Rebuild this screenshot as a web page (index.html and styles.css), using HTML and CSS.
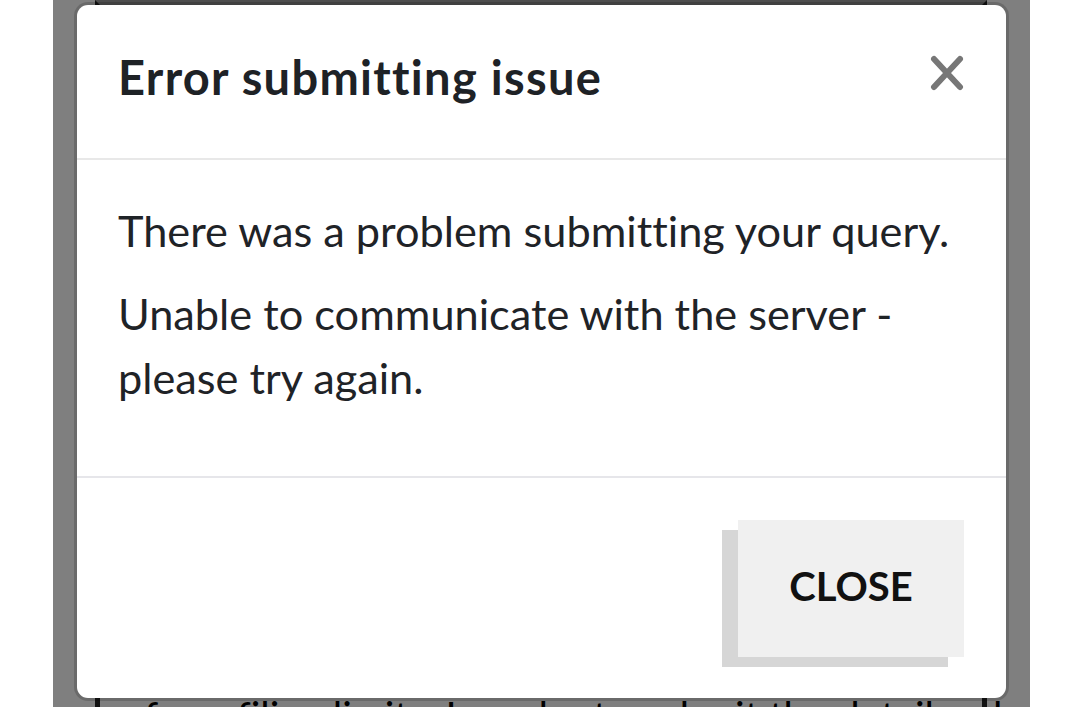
FILE: index.html
```html
<!DOCTYPE html>
<html lang="en">
<head>
<meta charset="utf-8">
<title>Error submitting issue</title>
<link rel="stylesheet" href="styles.css">
</head>
<body>
<div class="screen">
  <div class="bg-card">
    <p class="bg-text">of our filing limits. In order to submit the details, please email</p>
  </div>
  <div class="overlay">
    <div class="modal" role="dialog" aria-labelledby="modal-title">
      <div class="modal-header">
        <h1 id="modal-title" class="modal-title">Error submitting issue</h1>
        <button class="icon-close" aria-label="Close">
          <svg width="34" height="36" viewBox="0 0 34 36" aria-hidden="true">
            <path d="M4 4 L30 32 M30 4 L4 32" stroke="#777" stroke-width="6" stroke-linecap="round" fill="none"/>
          </svg>
        </button>
      </div>
      <div class="modal-body">
        <p class="msg">There was a problem submitting your query.</p>
        <p class="msg">Unable to communicate with the server - please try again.</p>
      </div>
      <div class="modal-footer">
        <button class="btn-close">CLOSE</button>
      </div>
    </div>
  </div>
</div>
</body>
</html>
```

FILE: styles.css
```css
* { box-sizing: border-box; }

html, body {
  margin: 0;
  padding: 0;
  background: #ffffff;
}

body {
  font-family: "Lato", "Open Sans", sans-serif;
  font-variant-ligatures: none;
  color: #1f2327;
}

.screen {
  position: relative;
  width: 977px;
  height: 707px;
  margin-left: 53px;
  overflow: hidden;
  background: #ffffff;
}

.bg-card {
  margin-left: 42px;
  width: 892px;
  height: 760px;
  border-top: 5px solid #9a9a9a;
  border-left: 5px solid #222;
  border-right: 5px solid #222;
  padding: 686px 22px 0;
}

.bg-text {
  margin: 0;
  font-size: 40px;
  line-height: 50px;
  font-weight: 400;
  color: #000;
  white-space: nowrap;
}

.overlay {
  position: absolute;
  inset: 0;
  background: rgba(0, 0, 0, 0.5);
  padding: 5px 0 0 24px;
}

.modal {
  width: 929px;
  height: 693px;
  background: #ffffff;
  border-radius: 11px;
  box-shadow: 0 0 0 3px rgba(0, 0, 0, 0.16);
  display: flex;
  flex-direction: column;
  overflow: hidden;
}

.modal-header {
  height: 155px;
  flex: none;
  display: flex;
  justify-content: space-between;
  align-items: flex-start;
  padding: 45px 42px 0 41px;
  border-bottom: 2px solid #e8e8e8;
}

.modal-title {
  margin: 0;
  font-size: 47px;
  line-height: 55px;
  font-weight: 700;
  letter-spacing: 1.3px;
  color: #1e2226;
}

.icon-close {
  margin-top: 5px;
  padding: 0;
  border: 0;
  background: none;
  width: 34px;
  height: 36px;
  display: flex;
}

.modal-body {
  height: 318px;
  flex: none;
  padding: 38px 41px 0 41px;
  border-bottom: 2px solid #e6e6ea;
}

.msg {
  margin: 0 0 19px;
  font-size: 43.3px;
  line-height: 64px;
  color: #1f2327;
}

.modal-footer {
  flex: 1;
  display: flex;
  justify-content: flex-end;
  align-items: flex-start;
  padding: 42px 42px 0 0;
}

.btn-close {
  width: 226px;
  height: 137px;
  border: 0;
  border-radius: 0;
  background: #f0f0f0;
  box-shadow: -16px 10px 0 #d6d6d6;
  font-family: "Lato", "Open Sans", sans-serif;
  font-size: 40px;
  font-weight: 700;
  color: #111;
  padding: 0 0 6px;
}
```
